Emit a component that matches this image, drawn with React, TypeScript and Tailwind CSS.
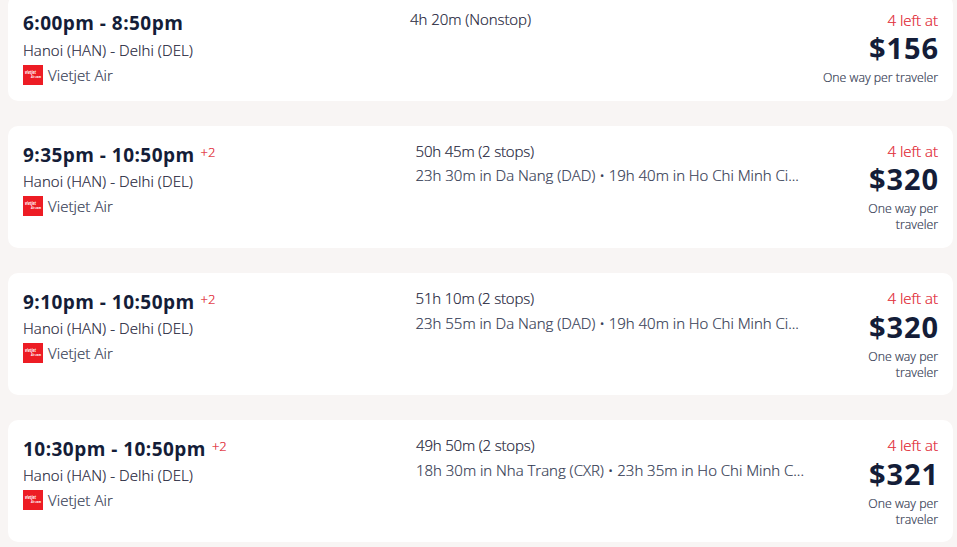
type Flight = {
  time: string;
  plus?: string;
  duration: string;
  stops?: string;
  middleClass: string;
  stopsClass?: string;
  priceClass: string;
  price: string;
};

const flights: Flight[] = [
  { time: "6:00pm - 8:50pm", duration: "4h 20m (Nonstop)", middleClass: "pl-0 pt-3 tracking-[-0.06px]", priceClass: "pt-0", price: "$156" },
  { time: "9:35pm - 10:50pm", plus: "+2", duration: "50h 45m (2 stops)", stops: "23h 30m in Da Nang (DAD) • 19h 40m in Ho Chi Minh Ci...", middleClass: "pl-[5.5px] pt-[13px] tracking-[-0.18px]", stopsClass: "pt-0", priceClass: "pt-0", price: "$320" },
  { time: "9:10pm - 10:50pm", plus: "+2", duration: "51h 10m (2 stops)", stops: "23h 55m in Da Nang (DAD) • 19h 40m in Ho Chi Minh Ci...", middleClass: "pl-[5.5px] pt-[13px] tracking-[-0.18px]", stopsClass: "pt-px", priceClass: "pt-px", price: "$320" },
  { time: "10:30pm - 10:50pm", plus: "+2", duration: "49h 50m (2 stops)", stops: "18h 30m in Nha Trang (CXR) • 23h 35m in Ho Chi Minh C...", middleClass: "pl-1.5 pt-[13px] tracking-[-0.18px]", stopsClass: "pt-px", priceClass: "pt-px", price: "$321" },
];

function VietjetLogo() {
  return (
    <svg viewBox="0 0 20 20" className="size-5 shrink-0 [-webkit-text-stroke:0px]" aria-label="Vietjet Air">
      <rect width="20" height="20" fill="#ed1c24" />
      <text x="2" y="9.4" fontSize="4.4" fontWeight="700" fontStyle="italic" fill="#fff" textLength="11" lengthAdjust="spacingAndGlyphs" fontFamily="Open Sans, sans-serif">vietjet</text>
      <text x="8" y="12.7" fontSize="3.4" fontWeight="700" fontStyle="italic" fill="#fff" textLength="10" lengthAdjust="spacingAndGlyphs" fontFamily="Open Sans, sans-serif">Air.com</text>
    </svg>
  );
}

function FlightCard({ flight }: { flight: Flight }) {
  const tall = Boolean(flight.stops);
  return (
    <article className={`flex shrink-0 rounded-[10px] bg-white px-[15px] ${tall ? "h-[122px]" : "h-[106px]"}`}>
      <div className="w-[387px] shrink-0 pt-[14px]">
        <div className={`flex h-7 items-center whitespace-nowrap text-[#141d38] ${tall ? "pt-0.5" : ""}`}>
          <h3 className="text-[19px] font-bold tracking-[0.46px]">{flight.time}</h3>
          {flight.plus && <span className="-mt-1 ml-1.5 text-[13px] font-light text-[#e0202c] [-webkit-text-stroke:0.2px]">{flight.plus}</span>}
        </div>
        <p className="h-7 text-[15px] font-light leading-[26px] tracking-[0.07px] text-[#1e243a] [-webkit-text-stroke:0.2px]">Hanoi (HAN) - Delhi (DEL)</p>
        <div className="flex h-5 items-center gap-[5px] text-[15px] font-light text-[#343b53]">
          <VietjetLogo />
          <span className="tracking-[0.07px] [-webkit-text-stroke:0.2px]">Vietjet Air</span>
        </div>
      </div>
      <div className={`min-w-0 flex-1 whitespace-nowrap text-[15px] font-light leading-6 [-webkit-text-stroke:0.2px] ${flight.middleClass}`}>
        <p className="text-[#1e243a]">{flight.duration}</p>
        {flight.stops && <p className={`tracking-[-0.02px] text-[#343b53] ${flight.stopsClass}`}>{flight.stops}</p>}
      </div>
      <div className={`shrink-0 pt-[13px] text-right ${tall ? "w-[78px]" : "w-[130px]"}`}>
        <p className="h-[25px] text-[15px] font-light leading-6 text-[#e0202c] [-webkit-text-stroke:0.2px]">4 left at</p>
        <div className={flight.priceClass}>
          <p className="-mr-px h-[30px] text-[29px] font-bold leading-[29px] tracking-[0.9px] text-[#141d38]">{flight.price}</p>
          <p className="mt-[7px] text-[12.3px] font-light leading-[16.4px] text-[#343b53] [-webkit-text-stroke:0.2px]">One way per traveler</p>
        </div>
      </div>
    </article>
  );
}

export default function App() {
  return (
    <main className="h-[547px] overflow-hidden bg-[#f8f5f4] pl-2 pr-1 font-['Open_Sans','Noto_Sans',sans-serif]">
      <div className="-mt-[5px] flex flex-col gap-[25px]">
        {flights.map((flight) => (
          <FlightCard key={flight.time} flight={flight} />
        ))}
      </div>
    </main>
  );
}
